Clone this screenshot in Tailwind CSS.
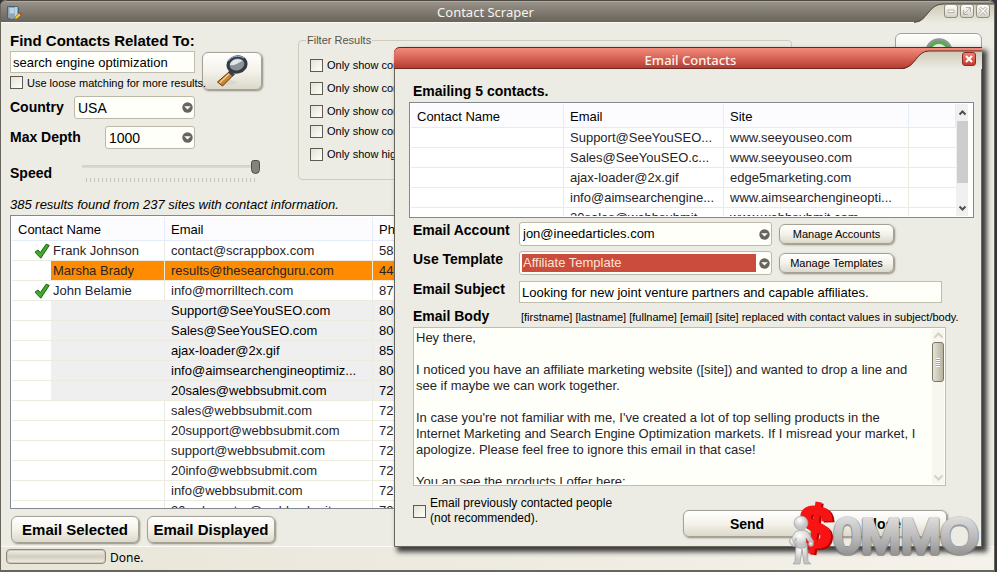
<!DOCTYPE html>
<html lang="en">
<head>
<meta charset="utf-8">
<title>Contact Scraper</title>
<script src="https://cdn.jsdelivr.net/npm/@tailwindcss/browser@4"></script>
</head>
<body class="relative flex min-h-screen overflow-hidden bg-[#35343b] pr-[2px] font-['Liberation_Sans',Arial,sans-serif] text-[13px] leading-4 text-black">

<svg class="absolute h-0 w-0" aria-hidden="true">
  <defs>
    <linearGradient id="tab" x1="0" y1="0" x2="0" y2="1"><stop offset="0" stop-color="#cfcab5"/><stop offset="1" stop-color="#ecebe4"/></linearGradient>
    <symbol id="check" viewBox="0 0 16 16"><path d="M1 9.2 4 7l2.3 2.6L12.2 1.2 15.2 2.4 6.8 15.2z" fill="#3fae29" stroke="#1f5c14" stroke-width="1"/></symbol>
    <symbol id="drop" viewBox="0 0 11 11"><circle cx="5.5" cy="5.5" r="5.2" fill="#68665c"/><path d="M2.2 4.2h6.6L5.5 7.6z" fill="#fff"/></symbol>
  </defs>
</svg>

<!-- Main window -->
<div class="flex min-w-0 flex-1 flex-col rounded-t-md border-x border-b-2 border-[#68665c] bg-[#ecebe4]">
  <header class="relative h-[23px] rounded-t-md border-t border-b border-t-[#4b4942] border-b-[#fbfaf6] bg-linear-to-b from-[#9a948a] to-[#69645a] shadow-[inset_0_1px_0_#b0aaa0]">
    <svg class="absolute top-[4px] left-[6px] h-4 w-4" viewBox="0 0 16 16" aria-hidden="true">
      <path d="M.5 1.500h10l1 1v10.500l-7 1.500-4-1.500z" fill="#8ea5b8" stroke="#4a6075"/><path d="M2.500 3h5v5.500h-5z" fill="#bcd3e2"/><path d="M9 2v12" stroke="#cfe6f2" stroke-width="1.500"/><path d="M7.500 14.500l1-3 3.500-3.500 2 2-3.500 3.500z" fill="#f2c230" stroke="#8a6412" stroke-width=".6"/><path d="M12 8l1-1 2 2-1 1z" fill="#d33"/>
    </svg>
    <h1 class="pr-6 text-center font-['Noto_Sans',sans-serif] text-[13px] leading-[23px] text-[#f6f4ee]">Contact Scraper</h1>
    <svg class="absolute top-[2px] right-0 h-[20px] w-[80px]" viewBox="0 0 80 20" preserveAspectRatio="none" aria-hidden="true">
      <path d="M0 20C14 19 14 1 29 1h51v19z" fill="url(#tab)"/><path d="M0 19.500C14 18.500 14 1 29 1h51" fill="none" stroke="#4b4942"/>
    </svg>
    <div class="absolute top-[3px] right-1 flex gap-[2px]">
      <button aria-label="Minimize" class="flex h-[14px] w-[14px] items-center justify-center rounded-[3px] border border-[#8f8c80] bg-linear-to-b from-white to-[#d5d2c4]"><svg class="h-[12px] w-[12px]" viewBox="0 0 12 12"><path d="M3 5h6v2.500H3z" fill="#fff" stroke="#b5b2a4"/></svg></button>
      <button aria-label="Restore" class="flex h-[14px] w-[14px] items-center justify-center rounded-[3px] border border-[#8f8c80] bg-linear-to-b from-white to-[#d5d2c4]"><svg class="h-[12px] w-[12px]" viewBox="0 0 12 12"><path d="M5 2.500h4.500V7M2.500 5v4.500H7M3 9l6-6" fill="none" stroke="#b5b2a4"/></svg></button>
      <button aria-label="Close" class="flex h-[14px] w-[14px] items-center justify-center rounded-[3px] border border-[#8f8c80] bg-linear-to-b from-white to-[#d5d2c4]"><svg class="h-[12px] w-[12px]" viewBox="0 0 12 12"><path d="M2.500 2.500l7 7M9.500 2.500l-7 7" fill="none" stroke="#a9a698" stroke-width="3"/><path d="M2.500 2.500l7 7M9.500 2.500l-7 7" fill="none" stroke="#fff" stroke-width="1.400"/></svg></button>
    </div>
  </header>

  <main class="flex flex-1 flex-col pr-3 pl-[9px]">
    <div class="flex items-start pt-[9px]">
      <!-- Search form -->
      <form class="w-[278px] shrink-0">
        <div class="flex gap-[7px]">
          <div class="w-[185px]">
            <label for="kw" class="block text-[15px] leading-[18px] font-bold whitespace-nowrap">Find Contacts Related To:</label>
            <input id="kw" type="text" value="search engine optimization" class="mt-[1px] block h-[22px] w-full border border-[#c0bdaf] bg-[#fffffa] px-[2px] text-[13px]">
          </div>
          <button type="button" aria-label="Search" class="mt-5 flex h-[38px] w-[60px] items-center justify-center rounded-md border border-[#a5a295] bg-linear-to-b from-white via-[#f4f2ea] to-[#dcd9cb] shadow-[1px_1px_2px_#8c897c]">
            <svg class="h-8 w-8" viewBox="0 0 32 32" aria-hidden="true"><path d="M8 30q8 1 14-3l-8-2z" fill="#d9d6ca"/><path d="M13 17l4 3.500L6.500 31 1.500 27z" fill="#c98434" stroke="#5d3510"/><path d="M13.500 18.500 3.500 28" stroke="#f7cd82" stroke-width="1.500"/><path d="M14 15l5 4.500-2.500 2L12 17.500z" fill="#3b4148"/><ellipse cx="21" cy="9.500" rx="9" ry="7.500" fill="#8c9297" stroke="#343b42" stroke-width="3.200" transform="rotate(-15 21 9.500)"/><path d="M14 10c1-6 9-7 13-4-3 0-6 5-13 4z" fill="#dfe5e9"/><path d="M12.500 6C15 1 23 0 28 3" fill="none" stroke="#9cb7cf"/></svg>
          </button>
        </div>
        <label class="-mt-[15px] flex h-[15px] w-[190px] items-center gap-1 text-[11px] whitespace-nowrap"><input type="checkbox" class="h-[13px] w-[13px] shrink-0 appearance-none border border-[#5e5c52] bg-linear-to-br from-[#e4e2d6] to-[#fffff8]">Use loose matching for more results.</label>
        <div class="mt-[6px] flex w-[185px] items-center justify-between">
          <label for="country" class="-mt-[2px] text-[14px] font-bold">Country</label>
          <span class="relative"><select id="country" class="block h-[23px] w-[121px] appearance-none rounded-[3px] border border-[#bcb9ab] bg-[#fffffa] px-[3px] text-[14px]"><option>USA</option></select><svg class="pointer-events-none absolute top-[6px] right-[2px] h-[11px] w-[11px]"><use href="#drop"/></svg></span>
        </div>
        <div class="mt-[7px] flex w-[185px] items-center justify-between">
          <label for="depth" class="-mt-[2px] text-[14px] font-bold">Max Depth</label>
          <span class="relative"><select id="depth" class="block h-[23px] w-[90px] appearance-none rounded-[3px] border border-[#bcb9ab] bg-[#fffffa] px-[3px] text-[14px]"><option>1000</option></select><svg class="pointer-events-none absolute top-[6px] right-[2px] h-[11px] w-[11px]"><use href="#drop"/></svg></span>
        </div>
        <div class="mt-[10px] flex h-6 w-[250px] items-start justify-between">
          <label for="speed" class="mt-[6px] text-[14px] font-bold">Speed</label>
          <div class="w-[178px]">
            <input id="speed" type="range" value="100" class="block h-[15px] w-full appearance-none bg-transparent bg-[linear-gradient(#d2d0c3,#dedcd0)] bg-[length:100%_3px] bg-center bg-no-repeat [&::-webkit-slider-thumb]:h-[14px] [&::-webkit-slider-thumb]:w-[9px] [&::-webkit-slider-thumb]:appearance-none [&::-webkit-slider-thumb]:rounded-t-[3px] [&::-webkit-slider-thumb]:rounded-b-[5px] [&::-webkit-slider-thumb]:border [&::-webkit-slider-thumb]:border-[#4f4d44] [&::-webkit-slider-thumb]:bg-[#85827a]">
            <div class="mx-1 mt-1 h-1 bg-[repeating-linear-gradient(90deg,#c5c3b8_0_1px,transparent_1px_4px)]"></div>
          </div>
        </div>
      </form>

      <!-- Filters -->
      <fieldset class="ml-[10px] h-[148px] w-[494px] rounded-[4px] border border-[#cfccbd] px-[11px] pt-[9px] text-[11px]">
        <legend class="-ml-1 px-[1px] text-[#55534a]">Filter Results</legend>
        <div class="flex flex-col gap-[7px] whitespace-nowrap">
          <label class="flex items-center gap-1"><input type="checkbox" class="h-[13px] w-[13px] appearance-none border border-[#5e5c52] bg-linear-to-br from-[#e4e2d6] to-[#fffff8]">Only show contacts with email.</label>
          <label class="flex items-center gap-1"><input type="checkbox" class="h-[13px] w-[13px] appearance-none border border-[#5e5c52] bg-linear-to-br from-[#e4e2d6] to-[#fffff8]">Only show contacts with phone.</label>
          <label class="flex items-center gap-1"><input type="checkbox" class="h-[13px] w-[13px] appearance-none border border-[#5e5c52] bg-linear-to-br from-[#e4e2d6] to-[#fffff8]">Only show contacts with name.</label>
          <label class="-mt-[3px] flex items-center gap-1"><input type="checkbox" class="h-[13px] w-[13px] appearance-none border border-[#5e5c52] bg-linear-to-br from-[#e4e2d6] to-[#fffff8]">Only show contacts with site.</label>
          <label class="flex items-center gap-1"><input type="checkbox" class="h-[13px] w-[13px] appearance-none border border-[#5e5c52] bg-linear-to-br from-[#e4e2d6] to-[#fffff8]">Only show highlighted.</label>
        </div>
      </fieldset>
      <button type="button" aria-label="Help" class="mt-[1px] ml-auto flex h-[38px] w-[87px] justify-center rounded-md border border-[#a5a295] bg-linear-to-b from-white to-[#dcd9cb] pt-1">
        <svg class="h-7 w-7" viewBox="0 0 28 28" aria-hidden="true"><circle cx="14" cy="14" r="12.500" fill="#5bab4b" stroke="#8a9698" stroke-width="2.500"/><path d="M14 6a8 8 0 0 1 8 8H6a8 8 0 0 1 8-8z" fill="#e9f5e6"/></svg>
      </button>
    </div>

    <p class="mt-[14px] text-[13px] whitespace-nowrap italic">385 results found from 237 sites with contact information.</p>

    <div class="mt-[2px] h-[294px] overflow-hidden border border-[#828790] bg-white px-[1px] pt-[1px]">
      <table class="w-full table-fixed border-separate border-spacing-0 text-left text-[#26242a] [&_td]:h-5 [&_td]:border-r [&_td]:border-b [&_td]:border-[#ecebe0] [&_td]:p-0 [&_td]:whitespace-nowrap">
        <colgroup><col class="w-[39px]"><col class="w-[114px]"><col class="w-[208px]"><col></colgroup>
        <thead><tr class="bg-[#fcfcfe] text-black [&_th]:h-[24px] [&_th]:border-r [&_th]:border-b [&_th]:border-[#e3ecf8] [&_th]:p-0 [&_th]:pt-[2px] [&_th]:font-normal">
          <th colspan="2"><span class="pl-[6px]">Contact Name</span></th><th><span class="pl-[6px]">Email</span></th><th><span class="pl-[6px]">Phone</span></th></tr></thead>
        <tbody>
          <tr><td class="border-r-0!"><svg class="ml-[22px] h-4 w-4"><use href="#check"/></svg></td><td><span class="pl-[2px]">Frank Johnson</span></td><td><span class="pl-[6px]">contact@scrappbox.com</span></td><td><span class="pl-[6px]">585</span></td></tr>
          <tr><td class="border-r-0!"></td><td class="bg-[#ff8c00]"><span class="pl-[2px]">Marsha Brady</span></td><td class="bg-[#ff8c00]"><span class="pl-[6px]">results@thesearchguru.com</span></td><td class="bg-[#ff8c00]"><span class="pl-[6px]">440</span></td></tr>
          <tr><td class="border-r-0!"><svg class="ml-[22px] h-4 w-4"><use href="#check"/></svg></td><td><span class="pl-[2px]">John Belamie</span></td><td><span class="pl-[6px]">info@morrilltech.com</span></td><td><span class="pl-[6px]">877</span></td></tr>
          <tr class="text-black"><td class="border-r-0!"></td><td class="border-r-0! bg-[#efefef]"></td><td class="bg-[#efefef]"><span class="pl-[6px]">Support@SeeYouSEO.com</span></td><td class="bg-[#efefef]"><span class="pl-[6px]">800</span></td></tr>
          <tr class="text-black"><td class="border-r-0!"></td><td class="border-r-0! bg-[#efefef]"></td><td class="bg-[#efefef]"><span class="pl-[6px]">Sales@SeeYouSEO.com</span></td><td class="bg-[#efefef]"><span class="pl-[6px]">800</span></td></tr>
          <tr class="text-black"><td class="border-r-0!"></td><td class="border-r-0! bg-[#efefef]"></td><td class="bg-[#efefef]"><span class="pl-[6px]">ajax-loader@2x.gif</span></td><td class="bg-[#efefef]"><span class="pl-[6px]">855</span></td></tr>
          <tr class="text-black"><td class="border-r-0!"></td><td class="border-r-0! bg-[#efefef]"></td><td class="bg-[#efefef]"><span class="pl-[6px]">info@aimsearchengineoptimiz...</span></td><td class="bg-[#efefef]"><span class="pl-[6px]">800</span></td></tr>
          <tr class="text-black"><td class="border-r-0!"></td><td class="border-r-0! bg-[#efefef]"></td><td class="bg-[#efefef]"><span class="pl-[6px]">20sales@webbsubmit.com</span></td><td class="bg-[#efefef]"><span class="pl-[6px]">727</span></td></tr>
          <tr><td class="border-r-0!"></td><td></td><td><span class="pl-[6px]">sales@webbsubmit.com</span></td><td><span class="pl-[6px]">727</span></td></tr>
          <tr><td class="border-r-0!"></td><td></td><td><span class="pl-[6px]">20support@webbsubmit.com</span></td><td><span class="pl-[6px]">727</span></td></tr>
          <tr><td class="border-r-0!"></td><td></td><td><span class="pl-[6px]">support@webbsubmit.com</span></td><td><span class="pl-[6px]">727</span></td></tr>
          <tr><td class="border-r-0!"></td><td></td><td><span class="pl-[6px]">20info@webbsubmit.com</span></td><td><span class="pl-[6px]">727</span></td></tr>
          <tr><td class="border-r-0!"></td><td></td><td><span class="pl-[6px]">info@webbsubmit.com</span></td><td><span class="pl-[6px]">727</span></td></tr>
          <tr><td class="border-r-0!"></td><td></td><td><span class="pl-[6px]">20webmaster@webbsubmit.com</span></td><td><span class="pl-[6px]">727</span></td></tr>
        </tbody>
      </table>
    </div>

    <div class="mt-[7px] flex gap-2 pl-[1px]">
      <button type="button" class="h-[27px] w-32 rounded-md border border-[#a5a295] bg-linear-to-b from-white via-[#f4f2ea] to-[#dcd9cb] text-[15px] font-bold whitespace-nowrap shadow-[1px_1px_2px_#8c897c]">Email Selected</button>
      <button type="button" class="h-[27px] w-32 rounded-md border border-[#a5a295] bg-linear-to-b from-white via-[#f4f2ea] to-[#dcd9cb] text-[15px] font-bold whitespace-nowrap shadow-[1px_1px_2px_#8c897c]">Email Displayed</button>
    </div>
  </main>

  <footer class="mt-[2px] flex h-6 items-center gap-1 border-t border-[#fbfaf6] bg-linear-to-r from-[#e8e6d8] to-[#f4f2ea] pl-[5px] font-['Noto_Sans',sans-serif] text-[12px]">
    <div role="progressbar" aria-label="Progress" class="-mt-1 h-[15px] w-[100px] rounded-[4px] border border-[#8a887c] bg-linear-to-b from-[#f2f1e8] via-[#d2cfc1] to-[#f0eee4] shadow-[inset_0_0_0_1px_#cfccbd]"></div>
    <span class="-mt-[2px]">Done.</span>
  </footer>
</div>

<!-- Email dialog -->
<section role="dialog" aria-labelledby="dlg" class="absolute top-[47px] right-[15px] left-[394px] rounded-tl-md border border-[#68665c] bg-[#ecebe4] pb-[9px] shadow-[4px_4px_5px_1px_rgba(30,30,30,0.85)]">
  <header class="relative -mx-px -mt-px h-[22px] rounded-tl-md border-t border-b border-t-[#8a1717] border-b-[#6b2a24] bg-linear-to-b from-[#f38b7c] to-[#b63b31]">
    <h2 id="dlg" class="pl-[5px] text-center font-['Noto_Sans',sans-serif] text-[13px] leading-[24px] font-medium text-[#fff3ee]">Email Contacts</h2>
    <svg class="absolute top-[2px] right-0 h-[19px] w-[80px]" viewBox="0 0 80 19" preserveAspectRatio="none" aria-hidden="true">
      <path d="M0 19C14 18 14 1 27 1h53v18z" fill="url(#tab)"/><path d="M0 18.500C14 17.500 14 1 27 1h53" fill="none" stroke="#5b2a26"/>
    </svg>
    <button aria-label="Close dialog" class="absolute top-1 right-[6px] flex h-[14px] w-[14px] items-center justify-center rounded-[3px] border border-[#8e2b24] bg-linear-to-b from-[#ee8175] to-[#c3392e]"><svg class="h-[10px] w-[10px]" viewBox="0 0 10 10"><path d="M2 2l6 6M8 2l-6 6" stroke="#fff" stroke-width="2"/></svg></button>
  </header>

  <div class="pr-[7px] pl-[14px]">
    <h3 class="mt-[14px] pl-1 text-[14px] leading-4 font-bold">Emailing 5 contacts.</h3>
    <div class="mt-[3px] flex h-[116px] overflow-hidden border border-[#828790] bg-white p-[1px] pr-[5px]">
      <div class="min-w-0 flex-1 overflow-hidden">
      <table class="w-full table-fixed border-separate border-spacing-0 text-left text-[#26242a] [&_td]:h-5 [&_td]:border-r [&_td]:border-b [&_td]:border-[#ecebe0] [&_td]:p-0 [&_td]:whitespace-nowrap">
        <colgroup><col class="w-[153px]"><col class="w-[160px]"><col class="w-[185px]"><col></colgroup>
        <thead><tr class="bg-[#fcfcfe] text-black [&_th]:h-[24px] [&_th]:border-r [&_th]:border-b [&_th]:border-[#e3ecf8] [&_th]:p-0 [&_th]:pt-[2px] [&_th]:font-normal"><th><span class="pl-[6px]">Contact Name</span></th><th><span class="pl-[6px]">Email</span></th><th><span class="pl-[6px]">Site</span></th><th></th></tr></thead>
        <tbody>
          <tr><td></td><td><span class="pl-[6px]">Support@SeeYouSEO...</span></td><td><span class="pl-[6px]">www.seeyouseo.com</span></td><td class="border-r-0!"></td></tr>
          <tr><td></td><td><span class="pl-[6px]">Sales@SeeYouSEO.c...</span></td><td><span class="pl-[6px]">www.seeyouseo.com</span></td><td class="border-r-0!"></td></tr>
          <tr><td></td><td><span class="pl-[6px]">ajax-loader@2x.gif</span></td><td><span class="pl-[6px]">edge5marketing.com</span></td><td class="border-r-0!"></td></tr>
          <tr><td></td><td><span class="pl-[6px]">info@aimsearchengine...</span></td><td><span class="pl-[6px]">www.aimsearchengineopti...</span></td><td class="border-r-0!"></td></tr>
          <tr><td></td><td><span class="pl-[6px]">20sales@webbsubmit...</span></td><td><span class="pl-[6px]">www.webbsubmit.com</span></td><td class="border-r-0!"></td></tr>
        </tbody>
      </table>
      </div>
      <div class="flex w-3 flex-col items-center bg-[#f0f0f0]">
        <svg class="h-[17px] w-[9px]" viewBox="0 0 9 17"><path d="M1.500 10.500 4.500 7.500l3 3" fill="none" stroke="#505050" stroke-width="2"/></svg>
        <div class="h-[62px] w-[11px] bg-[#cdcdcd]"></div>
        <svg class="mt-auto h-[17px] w-[9px]" viewBox="0 0 9 17"><path d="M1.500 7.500 4.500 10.500l3-3" fill="none" stroke="#505050" stroke-width="2"/></svg>
      </div>
    </div>

    <div class="mt-1 grid grid-cols-[106px_253px_1fr] items-start gap-y-[5px] pl-1">
      <label for="acct" class="text-[14px] leading-4 font-bold">Email Account</label>
      <span class="relative"><select id="acct" class="block h-[24px] w-full appearance-none rounded-[3px] border border-[#bcb9ab] bg-[#fffffa] px-[3px] text-[13px]"><option>jon@ineedarticles.com</option></select><svg class="pointer-events-none absolute top-[7px] right-[2px] h-[11px] w-[11px]"><use href="#drop"/></svg></span>
      <button type="button" class="mt-[2px] ml-[7px] h-5 w-[115px] rounded-md border border-[#a5a295] bg-linear-to-b from-white via-[#f4f2ea] to-[#dcd9cb] text-[11px] shadow-[1px_1px_2px_#8c897c]">Manage Accounts</button>
      <label for="tpl" class="text-[14px] leading-4 font-bold">Use Template</label>
      <span class="relative"><select id="tpl" class="block h-[24px] w-full appearance-none rounded-[3px] border border-[#bcb9ab] bg-[#fffffa] bg-[linear-gradient(#cb4b3c,#cb4b3c)] bg-[length:234px_18px] bg-[position:2px_2px] bg-no-repeat px-[3px] text-[13px] text-[#fbe4d4]"><option>Affiliate Template</option></select><svg class="pointer-events-none absolute top-[7px] right-[2px] h-[11px] w-[11px]"><use href="#drop"/></svg></span>
      <button type="button" class="mt-[2px] ml-[7px] h-5 w-[115px] rounded-md border border-[#a5a295] bg-linear-to-b from-white via-[#f4f2ea] to-[#dcd9cb] text-[11px] shadow-[1px_1px_2px_#8c897c]">Manage Templates</button>
      <label for="subj" class="mt-[1px] text-[14px] leading-4 font-bold">Email Subject</label>
      <input id="subj" type="text" value="Looking for new joint venture partners and capable affiliates." class="col-span-2 mt-[1px] mr-[32px] h-[22px] border border-[#c0bdaf] bg-[#fffffa] px-[2px] text-[13px]">
      <label for="body" class="text-[14px] leading-4 font-bold">Email Body</label>
      <p class="col-span-2 pt-[1px] pl-[2px] text-[11px] leading-4 whitespace-nowrap">[firstname] [lastname] [fullname] [email] [site] replaced with contact values in subject/body.</p>
    </div>

    <div class="mt-[2px] mr-[28px] ml-1 flex h-[159px] border border-[#c0bdaf] bg-[#fffffa]">
      <textarea id="body" class="my-[1px] min-w-0 flex-1 resize-none overflow-hidden px-[2px] pt-[1px] text-[13px] leading-4 text-[#26242a]">Hey there,

I noticed you have an affiliate marketing website ([site]) and wanted to drop a line and
see if maybe we can work together.

In case you're not familiar with me, I've created a lot of top selling products in the
Internet Marketing and Search Engine Optimization markets. If I misread your market, I
apologize. Please feel free to ignore this email in that case!

You an see the products I offer here:</textarea>
      <div class="m-[1px] flex w-3 flex-col items-center bg-[#f8f7ef]">
        <svg class="h-[13px] w-[11px]" viewBox="0 0 11 13"><path d="M1.500 8.500l4-4 4 4" fill="none" stroke="#d5d2c4" stroke-width="2"/></svg>
        <div class="flex h-10 w-3 items-center justify-center rounded-[3px] border border-[#78766a] bg-linear-to-r from-[#e6e3d5] to-[#b5b2a0]"><div class="h-[9px] w-1 bg-[repeating-linear-gradient(#fff_0_1px,#a5a292_1px_2px)]"></div></div>
        <svg class="mt-auto h-[13px] w-[11px]" viewBox="0 0 11 13"><path d="M1.500 4.500l4 4 4-4" fill="none" stroke="#d5d2c4" stroke-width="2"/></svg>
      </div>
    </div>

    <div class="mt-[10px] mr-[27px] ml-1 flex items-start justify-between">
      <label class="flex items-center gap-1 text-[12px] leading-[15px]"><input type="checkbox" class="h-[13px] w-[13px] appearance-none border border-[#5e5c52] bg-linear-to-br from-[#e4e2d6] to-[#fffff8]"><span>Email previously contacted people<br>(not recommended).</span></label>
      <div class="mt-[14px] flex gap-[6px]">
        <button type="button" class="h-[27px] w-32 rounded-md border border-[#a5a295] bg-linear-to-b from-white via-[#f4f2ea] to-[#dcd9cb] text-[14px] font-bold shadow-[1px_1px_2px_#8c897c]">Send</button>
        <button type="button" class="h-[27px] w-[130px] rounded-md border border-[#a5a295] bg-linear-to-b from-white via-[#f4f2ea] to-[#dcd9cb] text-[14px] font-bold shadow-[1px_1px_2px_#8c897c]">Close</button>
      </div>
    </div>
  </div>
</section>

<!-- Brand overlay -->
<svg class="absolute right-[12px] bottom-[2px] h-[75px] w-[200px]" viewBox="0 0 200 75" role="img" aria-label="$0MMO">
  <defs>
    <linearGradient id="steel" x1="0" y1="0" x2="0" y2="1"><stop offset=".1" stop-color="#e2e2e2"/><stop offset=".55" stop-color="#b8b8b8"/><stop offset="1" stop-color="#858585"/></linearGradient>
    <radialGradient id="skin" cx=".4" cy=".3"><stop offset="0" stop-color="#fff"/><stop offset="1" stop-color="#c4c4c4"/></radialGradient>
  </defs>
  <g font-family="Liberation Sans, Arial, sans-serif">
    <text x="49" y="58" font-size="48" fill="none" stroke="#777777" stroke-opacity=".7" stroke-width="6" stroke-linejoin="round">0MMO</text>
    <text x="49" y="57" font-size="48" fill="url(#steel)" stroke="url(#steel)" stroke-width="4" stroke-linejoin="round">0MMO</text>
    <g transform="rotate(8 32 34)"><text x="15" y="54" font-size="60" font-weight="bold" fill="#b00000" stroke="#b00000" stroke-width="3">$</text><text x="13" y="53" font-size="60" font-weight="bold" fill="#f81414" stroke="#f81414" stroke-width="3">$</text></g>
  </g>
  <g fill="url(#skin)" stroke="#9a9a9a" stroke-width=".6" transform="translate(4 2)">
    <path d="M7 46 6 64l-2 3h7l2-15 2 15h7l-3-3-1-18z"/><path d="M6 35q7-4 13 0l6 10-3 3-5-7v9q-5 3-10 0v-9l-2 5-4-2z"/><path d="M2 40q-4 6 3 10l2-2-3-4z"/><circle cx="22" cy="47" r="2.500"/><circle cx="12" cy="26" r="7"/>
  </g>
</svg>
</body>
</html>
